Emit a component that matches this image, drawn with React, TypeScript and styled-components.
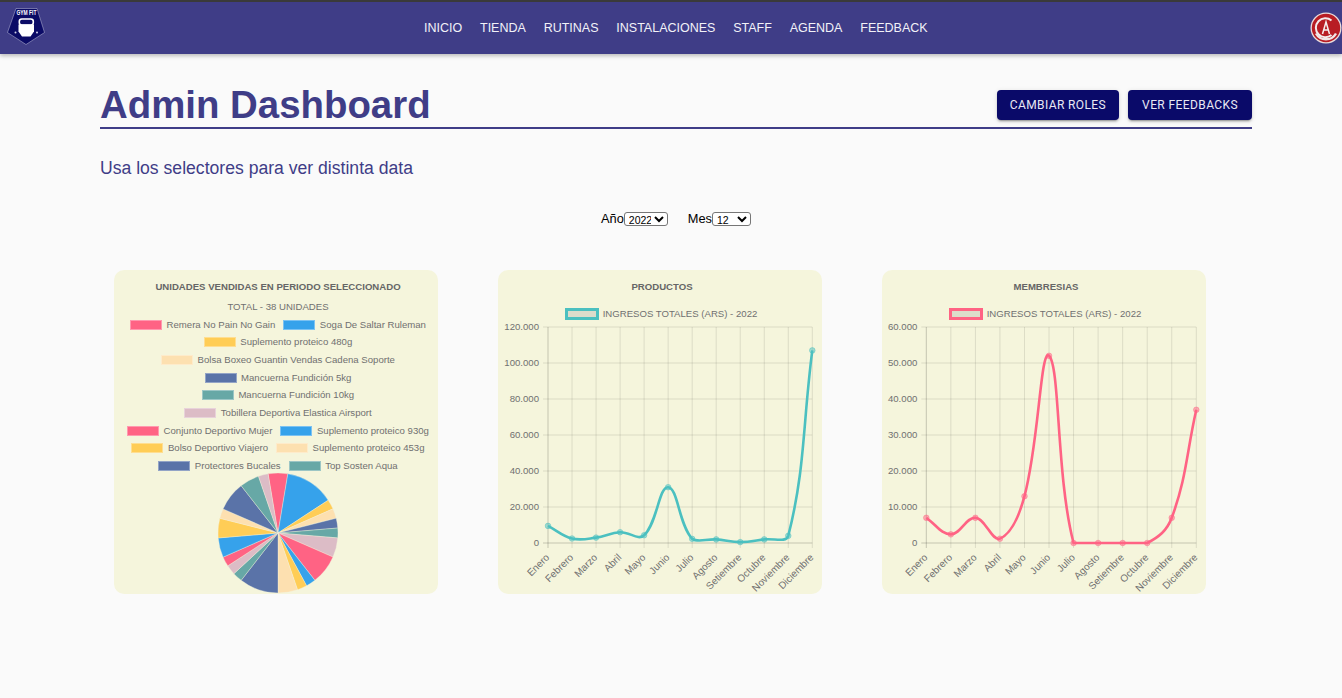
import React from 'react';
import styled, { createGlobalStyle } from 'styled-components';

const GlobalStyle = createGlobalStyle`
    html, body {
        margin: 0;
        padding: 0;
        background: #fafafa;
        font-family: 'Liberation Sans', Arial, sans-serif;
    }
`;

const Page = styled.div`
    min-height: 698px;
    background: #fafafa;
`;
const Nav = styled.nav`
    height: 52px;
    background: #3f3d87;
    border-top: 2px solid #3a3a3a;
    box-shadow: 0 2px 4px rgba(0, 0, 0, 0.25);
    display: flex;
    align-items: center;
    justify-content: space-between;
    padding: 0 0 0 6px;
`;
const NavLinks = styled.div`
    display: flex;
    gap: 17.8px;
    margin-left: 378px;
    flex: 1;
`;
const NavLink = styled.a`
    color: #f2f2f8;
    font-size: 12.5px;
    line-height: 20px;
    text-decoration: none;
    text-transform: uppercase;
`;
const Main = styled.main`
    padding: 0 90px 0 100px;
`;
const Header = styled.header`
    display: flex;
    align-items: center;
    justify-content: space-between;
    height: 38px;
    padding: 32px 0 3px;
    border-bottom: 2px solid #3f3d87;
`;
const Title = styled.h1`
    margin: 0;
    color: #3f3d87;
    font-size: 38.4px;
    font-weight: 700;
    line-height: 44px;
`;
const Actions = styled.div`
    display: flex;
    gap: 9px;
`;
const Button = styled.button<{ $pad: number }>`
    height: 30px;
    padding: 0 ${(p) => p.$pad}px;
    border: 0;
    border-radius: 4px;
    background: #0a0a69;
    color: #e8e8f4;
    font-family: Roboto, sans-serif;
    font-size: 12px;
    font-weight: 400;
    letter-spacing: 0.4px;
    text-transform: uppercase;
    box-shadow: 0 3px 1px -2px rgba(0, 0, 0, 0.2), 0 2px 2px rgba(0, 0, 0, 0.14), 0 1px 5px rgba(0, 0, 0, 0.12);
`;
const Subtitle = styled.p`
    margin: 28px 0 0;
    color: #3f3d87;
    font-size: 17.6px;
    line-height: 22px;
`;
const Filters = styled.div`
    display: flex;
    justify-content: center;
    gap: 20px;
    margin-top: 32px;
`;
const Filter = styled.label`
    display: flex;
    align-items: center;
    color: #000;
    font-size: 12.8px;
    line-height: 15px;
`;
const Select = styled.select<{ $w: number }>`
    width: ${(p) => p.$w}px;
    height: 14px;
    padding: 0;
    font-family: 'Liberation Sans', sans-serif;
    font-size: 10.5px;
    background: #fff;
    border: 1px solid #767676;
    border-radius: 3px;
`;
const Charts = styled.section`
    display: flex;
    gap: 60px;
    margin: 44px 0 0 14px;
`;
const Card = styled.article`
    box-sizing: border-box;
    width: 324px;
    height: 324px;
    padding-left: 4px;
    background: #f5f5dc;
    border-radius: 10px;
    overflow: hidden;
    display: flex;
    flex-direction: column;
    align-items: center;
    color: #707070;
    font-size: 9.6px;
    line-height: 12px;
`;
const CardTitle = styled.h2`
    margin: 11px 0 0;
    font-size: 9.6px;
    line-height: 12px;
    font-weight: 700;
    color: #666;
    text-transform: uppercase;
`;
const Total = styled.div`
    margin-top: 8px;
    height: 12px;
`;
const LegendList = styled.div`
    margin-top: 3px;
    display: flex;
    flex-direction: column;
    align-items: center;
`;
const LegendRow = styled.div`
    display: flex;
    gap: 8px;
    height: 17.65px;
    align-items: center;
`;
const LegendItem = styled.div`
    display: flex;
    align-items: center;
    gap: 4.5px;
    white-space: nowrap;
`;
const Swatch = styled.span<{ $color: string }>`
    display: block;
    width: 32px;
    height: 10px;
    box-sizing: border-box;
    background: ${(p) => p.$color};
    border: 1px solid rgba(255, 255, 255, 0.35);
`;
const LineLegend = styled.div`
    margin: 15px 2px 0 0;
    height: 12px;
    display: flex;
    align-items: center;
    gap: 4px;
`;
const LineSwatch = styled.span<{ $color: string }>`
    display: block;
    width: 34px;
    height: 12px;
    box-sizing: border-box;
    background: #dcdccb;
    border: 3px solid ${(p) => p.$color};
`;
const PlotSvg = styled.svg`
    display: block;
    align-self: flex-start;
    margin: 1px 0 0 -4px;
    flex: none;
`;
const PieSvg = styled.svg`
    display: block;
    flex: none;
    margin-top: -3px;
`;

const links = ['Inicio', 'Tienda', 'Rutinas', 'Instalaciones', 'Staff', 'Agenda', 'Feedback'];
const months = [
    'Enero', 'Febrero', 'Marzo', 'Abril', 'Mayo', 'Junio', 'Julio',
    'Agosto', 'Setiembre', 'Octubre', 'Noviembre', 'Diciembre',
];
const palette = ['#ff6384', '#36a2eb', '#ffcd56', '#fde0b0', '#5a73a8', '#67a8a6', '#dcbcc6'];

const legendRows = [
    [['Remera No Pain No Gain', 0], ['Soga De Saltar Ruleman', 1]],
    [['Suplemento proteico 480g', 2]],
    [['Bolsa Boxeo Guantin Vendas Cadena Soporte', 3]],
    [['Mancuerna Fundición 5kg', 4]],
    [['Mancuerna Fundición 10kg', 5]],
    [['Tobillera Deportiva Elastica Airsport', 6]],
    [['Conjunto Deportivo Mujer', 0], ['Suplemento proteico 930g', 1]],
    [['Bolso Deportivo Viajero', 2], ['Suplemento proteico 453g', 3]],
    [['Protectores Bucales', 4], ['Top Sosten Aqua', 5]],
] as [string, number][][];

// units per slice, colours repeat in palette order
const slices = [2, 5, 1, 1, 1, 1, 2, 3, 1, 1, 2, 4, 1, 1, 1, 2, 2, 1, 3, 2, 1];

function PieChart() {
    const c = 61;
    const r = 60;
    let angle = -9.5 - 90;
    const unit = 360 / 38;
    return (
        <PieSvg width="122" height="122" viewBox="0 0 122 122">
            {slices.map((n, i) => {
                const a0 = (angle * Math.PI) / 180;
                angle += n * unit;
                const a1 = (angle * Math.PI) / 180;
                const large = n * unit > 180 ? 1 : 0;
                const d = `M${c} ${c}L${c + r * Math.cos(a0)} ${c + r * Math.sin(a0)}A${r} ${r} 0 ${large} 1 ${c + r * Math.cos(a1)} ${c + r * Math.sin(a1)}Z`;
                return <path key={i} d={d} fill={palette[i % 7]} stroke="#f5f5dc" strokeOpacity="0.6" strokeWidth="0.6" />;
            })}
        </PieSvg>
    );
}

// same curve as chart.js uses for tension 0.4, with control points capped to the plot
const splinePath = (pts: number[][], top: number, bottom: number): string => {
    const t = 0.4;
    const clampY = (y: number) => Math.min(bottom, Math.max(top, y));
    const ctrl = pts.map((p, i) => {
        const prev = pts[i - 1] || p;
        const next = pts[i + 1] || p;
        const d01 = Math.hypot(p[0] - prev[0], p[1] - prev[1]);
        const d12 = Math.hypot(next[0] - p[0], next[1] - p[1]);
        const sum = d01 + d12 || 1;
        const dx = next[0] - prev[0];
        const dy = next[1] - prev[1];
        return {
            px: p[0] - (t * d01 * dx) / sum,
            py: clampY(p[1] - (t * d01 * dy) / sum),
            nx: p[0] + (t * d12 * dx) / sum,
            ny: clampY(p[1] + (t * d12 * dy) / sum),
        };
    });
    let d = `M${pts[0][0]} ${pts[0][1]}`;
    for (let i = 1; i < pts.length; i++) {
        d += `C${ctrl[i - 1].nx} ${ctrl[i - 1].ny} ${ctrl[i].px} ${ctrl[i].py} ${pts[i][0]} ${pts[i][1]}`;
    }
    return d;
};

type LineChartProps = {
    title: string;
    color: string;
    dot: string;
    values: number[];
    max: number;
    step: number;
    left: number;
};

function LineChart({ title, color, dot, values, max, step, left }: LineChartProps) {
    const right = 314.3;
    const top = 6;
    const bottom = 222;
    const xAt = (i: number) => left + ((right - left) * i) / 11;
    const yAt = (v: number) => bottom - ((bottom - top) * v) / max;
    const pts = values.map((v, i) => [xAt(i), yAt(v)]);
    const ticks: number[] = [];
    for (let v = 0; v <= max; v += step) ticks.push(v);
    return (
        <Card>
            <CardTitle>{title}</CardTitle>
            <LineLegend>
                <LineSwatch $color={color} />
                INGRESOS TOTALES (ARS) - 2022
            </LineLegend>
            <PlotSvg width="324" height="272" viewBox="0 0 324 272">
                {ticks.map((v) => (
                    <g key={v}>
                        <line
                            x1={left - 5}
                            x2={right}
                            y1={yAt(v)}
                            y2={yAt(v)}
                            stroke="#000"
                            strokeOpacity={v === 0 ? 0.2 : 0.1}
                        />
                        <text x={left - 9} y={yAt(v) + 3.4} fontSize="9.6" textAnchor="end" fill="#707070" fontFamily="Liberation Sans">
                            {v.toLocaleString('es-AR')}
                        </text>
                    </g>
                ))}
                {months.map((m, i) => (
                    <g key={m}>
                        <line
                            x1={xAt(i)}
                            x2={xAt(i)}
                            y1={top}
                            y2={bottom + 5}
                            stroke="#000"
                            strokeOpacity={i === 0 ? 0.2 : 0.1}
                        />
                        <text
                            transform={`translate(${xAt(i) + 2} ${bottom + 15}) rotate(-45)`}
                            fontSize="10"
                            textAnchor="end"
                            fill="#707070"
                            fontFamily="Liberation Sans"
                        >
                            {m}
                        </text>
                    </g>
                ))}
                <path d={splinePath(pts, top, bottom)} fill="none" stroke={color} strokeWidth="2.6" />
                {pts.map((p, i) => (
                    <circle key={i} cx={p[0]} cy={p[1]} r="2.8" fill={dot} stroke={color} strokeOpacity="0.45" />
                ))}
            </PlotSvg>
        </Card>
    );
}

function GymLogo() {
    return (
        <svg width="40" height="42" viewBox="0 0 40 42">
            <path d="M10 1.500H31L38.500 25.500 20 37.500 1.500 25.500Z" fill="#0b0b66" stroke="#e8e8f4" strokeWidth="0.4" />
            <text x="20.500" y="7.600" fontSize="7" fontWeight="700" textAnchor="middle" fill="#fff" fontFamily="Liberation Sans" textLength="20" lengthAdjust="spacingAndGlyphs">
                GYM FIT
            </text>
            <rect x="13.300" y="12" width="14" height="6" rx="2.500" fill="none" stroke="#fff" strokeWidth="1.600" />
            <path d="M12.500 17.500H28V24.500L24.500 29.500H16L12.500 24.500Z" fill="#fff" />
            <circle cx="9.500" cy="25.500" r="1" fill="#cfcfe6" />
            <circle cx="31" cy="25.500" r="1" fill="#cfcfe6" />
        </svg>
    );
}

function ClubBadge() {
    return (
        <svg width="32" height="32" viewBox="0 0 32 32">
            <circle cx="16" cy="16" r="15.500" fill="#e9dcdc" />
            <circle cx="16" cy="16" r="14.200" fill="#b81d24" />
            <path d="M21.500 8.500a9.500 9.500 0 1 0 0 14.500" fill="none" stroke="#f3ecec" strokeWidth="2" />
            <path d="M6 21.500a11.500 11.500 0 0 0 20 0" fill="none" stroke="#f0e6e6" strokeWidth="2.400" />
            <path d="M12.500 22l3.500-12 3.500 12M13.800 18h4.400" fill="none" stroke="#f6eeee" strokeWidth="1.500" />
        </svg>
    );
}

function App() {
    return (
        <Page>
            <GlobalStyle />
            <Nav>
                <GymLogo />
                <NavLinks>
                    {links.map((l) => (
                        <NavLink key={l} href="#">
                            {l}
                        </NavLink>
                    ))}
                </NavLinks>
                <ClubBadge />
            </Nav>
            <Main>
                <Header>
                    <Title>Admin Dashboard</Title>
                    <Actions>
                        <Button $pad={13}>Cambiar roles</Button>
                        <Button $pad={14}>Ver feedbacks</Button>
                    </Actions>
                </Header>
                <Subtitle>Usa los selectores para ver distinta data</Subtitle>
                <Filters>
                    <Filter>
                        Año
                        <Select $w={44} defaultValue="2022">
                            <option>2021</option>
                            <option>2022</option>
                        </Select>
                    </Filter>
                    <Filter>
                        Mes
                        <Select $w={39} defaultValue="12">
                            {months.map((_, i) => (
                                <option key={i}>{i + 1}</option>
                            ))}
                        </Select>
                    </Filter>
                </Filters>
                <Charts>
                    <Card>
                        <CardTitle>Unidades vendidas en periodo seleccionado</CardTitle>
                        <Total>TOTAL - 38 UNIDADES</Total>
                        <LegendList>
                            {legendRows.map((row, i) => (
                                <LegendRow key={i}>
                                    {row.map(([label, color]) => (
                                        <LegendItem key={label}>
                                            <Swatch $color={palette[color]} />
                                            {label}
                                        </LegendItem>
                                    ))}
                                </LegendRow>
                            ))}
                        </LegendList>
                        <PieChart />
                    </Card>
                    <LineChart
                        title="Productos"
                        color="#4bc0c0"
                        dot="rgba(75, 192, 192, 0.5)"
                        values={[9500, 2500, 3000, 6000, 4300, 31000, 2300, 2000, 500, 2000, 4000, 107000]}
                        max={120000}
                        step={20000}
                        left={50}
                    />
                    <LineChart
                        title="Membresias"
                        color="#ff6384"
                        dot="rgba(255, 99, 132, 0.5)"
                        values={[7000, 2400, 7000, 1200, 13000, 52000, 0, 0, 0, 0, 7000, 37000]}
                        max={60000}
                        step={10000}
                        left={44.3}
                    />
                </Charts>
            </Main>
        </Page>
    );
}

export default App;
